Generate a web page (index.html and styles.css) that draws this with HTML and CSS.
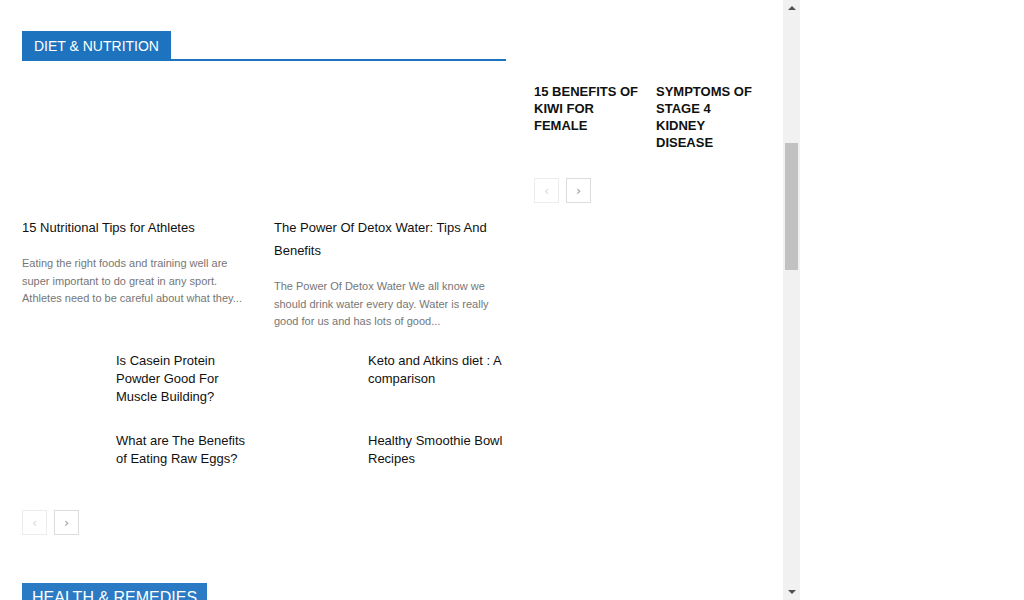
FILE: index.html
```html
<!DOCTYPE html>
<html>
<head>
<meta charset="utf-8">
<link rel="stylesheet" href="styles.css">
</head>
<body>
<div class="frame">
  <div class="page">
    <div class="cols">
      <section class="block">
        <div class="block-head"><span class="block-title">DIET &amp; NUTRITION</span></div>
        <div class="grid">
          <article class="big">
            <div class="big-thumb"></div>
            <h3 class="big-title">15 Nutritional Tips for Athletes</h3>
            <p class="excerpt">Eating the right foods and training well are super important to do great in any sport. Athletes need to be careful about what they...</p>
          </article>
          <article class="big">
            <div class="big-thumb"></div>
            <h3 class="big-title">The Power Of Detox Water: Tips And Benefits</h3>
            <p class="excerpt">The Power Of Detox Water We all know we should drink water every day. Water is really good for us and has lots of good...</p>
          </article>
          <article class="small">
            <div class="small-thumb"></div>
            <h3 class="small-title">Is Casein Protein Powder Good For Muscle Building?</h3>
          </article>
          <article class="small">
            <div class="small-thumb"></div>
            <h3 class="small-title">Keto and Atkins diet : A comparison</h3>
          </article>
          <article class="small">
            <div class="small-thumb"></div>
            <h3 class="small-title">What are The Benefits of Eating Raw Eggs?</h3>
          </article>
          <article class="small">
            <div class="small-thumb"></div>
            <h3 class="small-title">Healthy Smoothie Bowl Recipes</h3>
          </article>
        </div>
        <div class="pager pager-main">
          <span class="pbtn disabled">&#8249;</span>
          <span class="pbtn">&#8250;</span>
        </div>
      </section>
      <aside class="side">
        <div class="side-grid">
          <article class="side-item">
            <div class="side-thumb"></div>
            <h3 class="side-title">15 BENEFITS OF KIWI FOR FEMALE</h3>
          </article>
          <article class="side-item">
            <div class="side-thumb"></div>
            <h3 class="side-title">SYMPTOMS OF STAGE 4 KIDNEY DISEASE</h3>
          </article>
        </div>
        <div class="pager pager-side">
          <span class="pbtn disabled">&#8249;</span>
          <span class="pbtn">&#8250;</span>
        </div>
      </aside>
    </div>
    <section class="block next-block">
      <div class="block-head plain"><span class="block-title big-head">HEALTH &amp; REMEDIES</span></div>
    </section>
  </div>
</div>
<div class="scrollbar">
  <div class="sb-btn"><span class="arrow-up"></span></div>
  <div class="sb-track">
    <div class="sb-thumb"></div>
  </div>
  <div class="sb-btn"><span class="arrow-down"></span></div>
</div>
</body>
</html>
```
FILE: styles.css
```css
* { box-sizing: border-box; }
html, body { margin: 0; padding: 0; }
body {
  display: flex;
  width: 1024px;
  height: 600px;
  overflow: hidden;
  background: #fff;
  font-family: "Liberation Sans", Arial, sans-serif;
  color: #111;
}
.frame {
  width: 783px;
  height: 600px;
  overflow: hidden;
  flex: none;
}
.page {
  padding: 31px 0 0 22px;
}
.cols {
  display: flex;
  align-items: flex-start;
}
.block { width: 484px; flex: none; }
.block-head {
  display: flex;
  align-items: flex-start;
  border-bottom: 2px solid #1e73be;
}
.block-title {
  background: #1e73be;
  color: #fff;
  font-size: 14px;
  line-height: 30px;
  height: 30px;
  margin-bottom: -2px;
  padding: 0 12px;
}
.grid {
  display: grid;
  grid-template-columns: 232px 232px;
  column-gap: 20px;
}
.big-thumb { height: 155px; }
.big-title {
  margin: 0;
  font-size: 13px;
  line-height: 23px;
  font-weight: 400;
  color: #111;
}
.excerpt {
  margin: 16px 0 21px;
  font-size: 11px;
  line-height: 17.6px;
  color: #767676;
}
.small {
  display: flex;
  align-items: flex-start;
  margin-bottom: 10px;
}
.small-thumb {
  width: 84px;
  height: 70px;
  margin-right: 10px;
  flex: none;
}
.small-title {
  margin: 0;
  font-size: 13px;
  line-height: 18px;
  font-weight: 400;
  color: #111;
  width: 138px;
}
.pager { display: flex; gap: 7px; }
.pager-main { margin-top: -2px; }
.pbtn {
  width: 25px;
  height: 25px;
  border: 1px solid #dcdcdc;
  display: flex;
  align-items: center;
  justify-content: center;
  color: #9a9a9a;
  font-size: 13px;
  line-height: 1;
  font-family: "DejaVu Sans", sans-serif;
}
.pbtn.disabled { border-color: #ececec; color: #d8d8d8; }
.side { margin-left: 28px; width: 230px; flex: none; }
.side-grid {
  display: grid;
  grid-template-columns: 106px 106px;
  column-gap: 16px;
}
.side-thumb { height: 52px; }
.side-title {
  margin: 0;
  font-size: 13px;
  line-height: 17px;
  font-weight: 700;
  color: #111;
}
.pager-side { margin-top: 27px; }
.next-block { margin-top: 48px; }
.block-head.plain { border-bottom: none; }
.big-head {
  font-size: 16px;
  height: 30px;
  line-height: 30px;
  margin-bottom: 0;
  padding: 0 10px;
  background: #2a7bc4;
}
.scrollbar {
  width: 17px;
  height: 600px;
  background: #f1f1f1;
  display: flex;
  flex-direction: column;
  flex: none;
}
.sb-btn {
  height: 16px;
  display: flex;
  align-items: center;
  justify-content: center;
  flex: none;
}
.arrow-up, .arrow-down {
  width: 0; height: 0;
  border-left: 4px solid transparent;
  border-right: 4px solid transparent;
}
.arrow-up { border-bottom: 4px solid #505050; }
.arrow-down { border-top: 4px solid #505050; }
.sb-track {
  flex: 1;
  padding-top: 127px;
}
.sb-thumb {
  margin: 0 2px;
  height: 127px;
  background: #c1c1c1;
}
```
